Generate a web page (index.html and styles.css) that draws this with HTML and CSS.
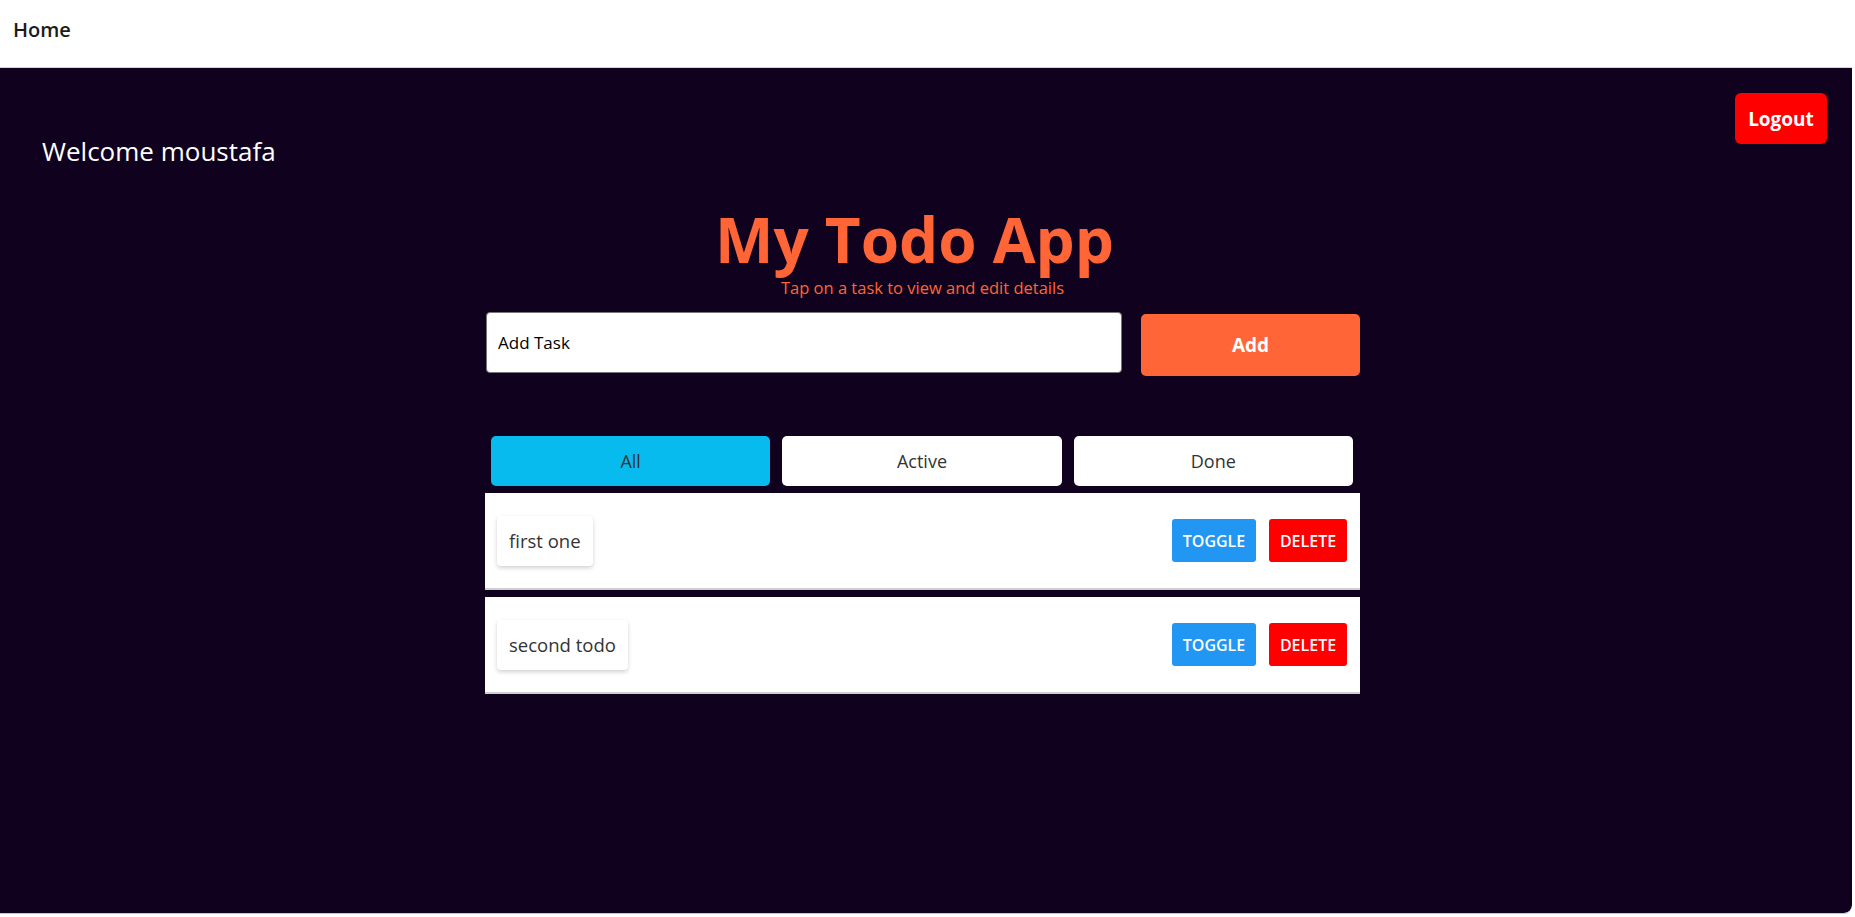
FILE: index.html
```html
<!DOCTYPE html>
<html lang="en">
<head>
<meta charset="utf-8">
<title>My Todo App</title>
<link rel="stylesheet" href="styles.css">
</head>
<body>
<div class="frame">
  <header class="topbar">
    <span class="home">Home</span>
  </header>
  <main class="main">
    <div class="userbar">
      <p class="welcome">Welcome moustafa</p>
      <button class="logout">Logout</button>
    </div>
    <div class="container">
      <h1 class="title">My Todo App</h1>
      <p class="subtitle">Tap on a task to view and edit details</p>
      <div class="addform">
        <input class="taskinput" type="text" value="Add Task">
        <button class="addbtn">Add</button>
      </div>
      <div class="tabs">
        <button class="tab tab-active">All</button>
        <button class="tab">Active</button>
        <button class="tab">Done</button>
      </div>
      <ul class="todos">
        <li class="todo">
          <span class="todo-label">first one</span>
          <div class="todo-actions">
            <button class="btn btn-toggle">TOGGLE</button>
            <button class="btn btn-delete">DELETE</button>
          </div>
        </li>
        <li class="todo">
          <span class="todo-label">second todo</span>
          <div class="todo-actions">
            <button class="btn btn-toggle">TOGGLE</button>
            <button class="btn btn-delete">DELETE</button>
          </div>
        </li>
      </ul>
    </div>
  </main>
</div>
</body>
</html>
```
FILE: styles.css
```css
* { box-sizing: border-box; }
html, body { margin: 0; padding: 0; }
body {
  background: #ffffff;
  font-family: "Open Sans", "Noto Sans", sans-serif;
  width: 1855px;
  height: 917px;
  overflow: hidden;
}
.frame {
  width: 1852px;
  height: 914px;
  display: flex;
  flex-direction: column;
  border-bottom: 1px solid #c9c6cc;
  border-bottom-right-radius: 8px;
  overflow: hidden;
}
.topbar {
  height: 68px;
  flex: 0 0 68px;
  background: #ffffff;
  border-bottom: 1px solid #d6d6d6;
  display: flex;
  align-items: center;
  padding-left: 13px;
  padding-bottom: 9px;
}
.home {
  font-size: 20px;
  font-weight: 600;
  color: #1b1b1b;
}
.main {
  flex: 1;
  background: #10021e;
  border-bottom-right-radius: 8px;
}
.userbar {
  display: flex;
  justify-content: space-between;
  align-items: flex-start;
  padding: 25px 25px 0 42px;
}
.welcome {
  margin: 0;
  margin-top: 40px;
  font-size: 26px;
  line-height: 36px;
  color: #ffffff;
}
.logout {
  width: 92px;
  height: 51px;
  border: none;
  border-radius: 6px;
  background: #ff0000;
  color: #ffffff;
  font-family: inherit;
  font-size: 19px;
  font-weight: 700;
  padding: 0;
}
.container {
  width: 882px;
  margin: 0 auto;
  padding-right: 7px;
  display: flex;
  flex-direction: column;
}
.title {
  margin: 0;
  margin-top: 38px;
  text-align: center;
  font-size: 62px;
  line-height: 64px;
  font-weight: 700;
  color: #ff6536;
  padding-right: 16px;
}
.subtitle {
  margin: 0;
  margin-top: 6px;
  text-align: center;
  font-size: 16.5px;
  line-height: 22px;
  color: #ff6536;
}
.addform {
  display: flex;
  align-items: flex-start;
  gap: 19px;
  margin-top: 13px;
  padding-left: 1px;
}
.taskinput {
  width: 636px;
  height: 61px;
  border: 1px solid #767676;
  border-radius: 4px;
  background: #ffffff;
  padding: 0 11px;
  font-family: inherit;
  font-size: 17px;
  color: #000000;
}
.addbtn {
  width: 219px;
  height: 62px;
  margin-top: 2px;
  border: none;
  border-radius: 5px;
  background: #ff6536;
  color: #ffffff;
  font-family: inherit;
  font-size: 19px;
  font-weight: 700;
}
.tabs {
  display: flex;
  gap: 12px;
  padding: 0 7px 0 6px;
  margin-top: 60px;
}
.tab {
  flex: 1;
  height: 50px;
  border: none;
  border-radius: 5px;
  background: #ffffff;
  color: #333333;
  font-family: inherit;
  font-size: 18px;
}
.tab-active {
  background: #08bbee;
}
.todos {
  list-style: none;
  margin: 7px 0 0 0;
  padding: 0;
  display: flex;
  flex-direction: column;
  gap: 7px;
}
.todo {
  height: 97px;
  background: #ffffff;
  border-bottom: 2px solid #cfcfcf;
  display: flex;
  align-items: center;
  justify-content: space-between;
  padding: 0 13px 0 12px;
}
.todo-label {
  height: 50px;
  display: flex;
  align-items: center;
  padding: 0 12px;
  border-radius: 4px;
  background: #ffffff;
  box-shadow: 0 2px 4px rgba(0, 0, 0, 0.18);
  font-size: 18.5px;
  color: #333333;
}
.todo-actions {
  display: flex;
  gap: 13px;
}
.btn {
  height: 43px;
  border: none;
  border-radius: 3px;
  color: #ffffff;
  font-family: inherit;
  font-size: 16px;
  font-weight: 600;
  padding: 0;
}
.btn-toggle {
  width: 84px;
  background: #2196f3;
}
.btn-delete {
  width: 78px;
  background: #ff0000;
}
```
